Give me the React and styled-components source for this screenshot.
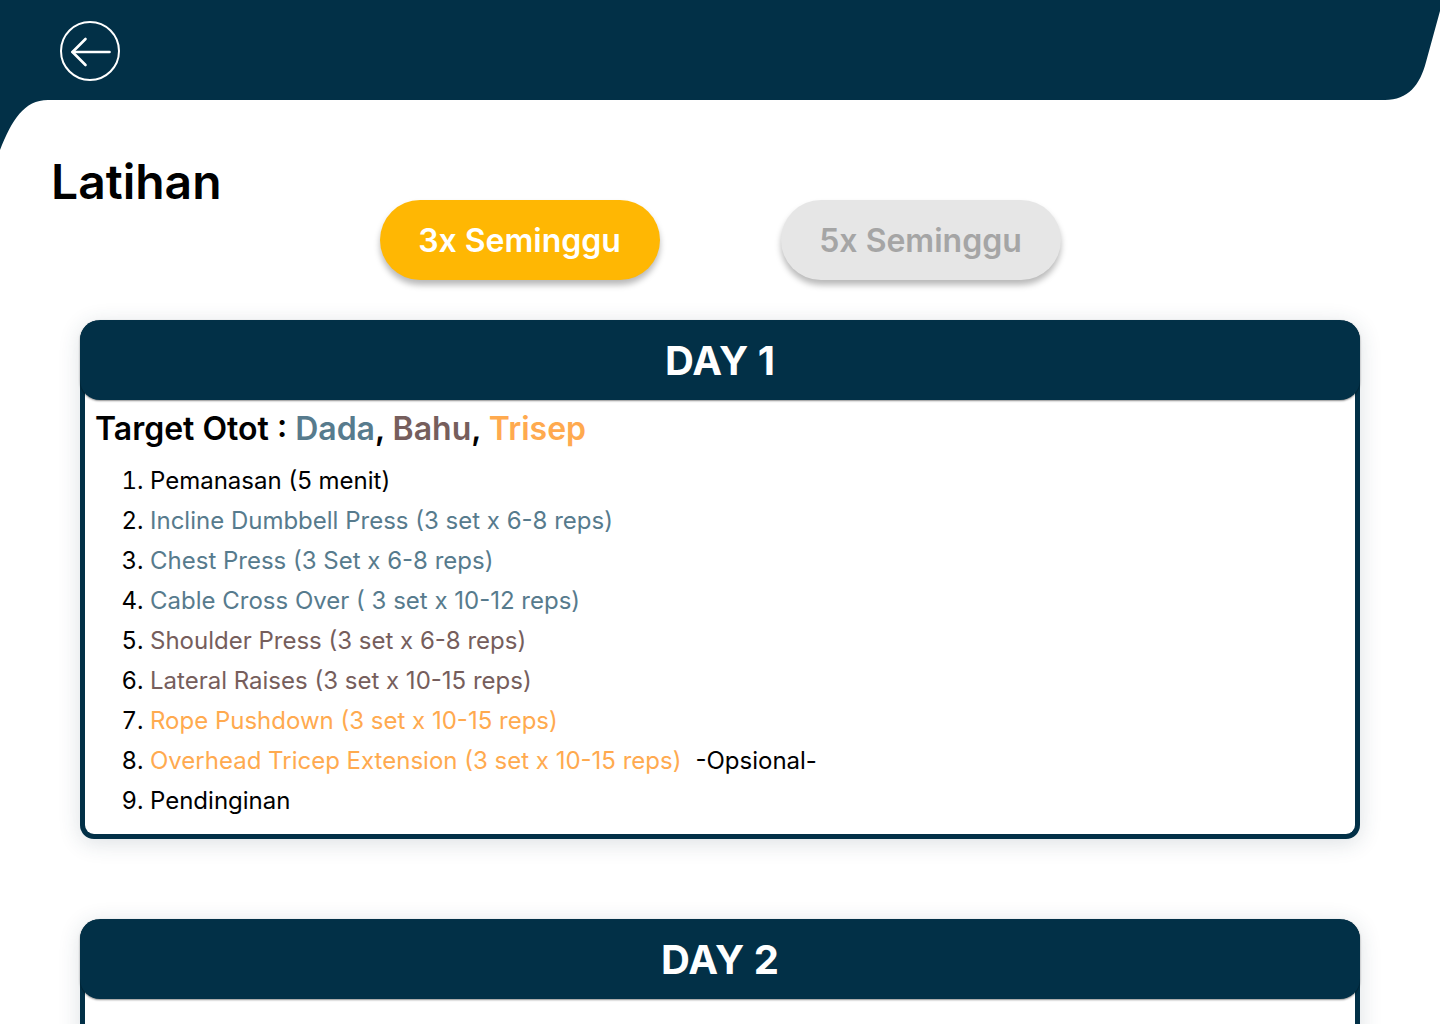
import React from "react";
import styled, { createGlobalStyle } from "styled-components";

const NAVY = "#023047";

const Global = createGlobalStyle`
  * { box-sizing: border-box; }
  html, body { margin: 0; padding: 0; background: #ffffff; }
  body { font-family: Inter, "Noto Sans", Roboto, sans-serif; color: #000; }
`;

const Page = styled.div`
  position: relative;
  width: 1440px;
  min-height: 1024px;
  overflow: hidden;
`;

const HeaderShape = styled.svg`
  position: absolute;
  top: 0;
  left: 0;
  width: 1440px;
  height: 150px;
  z-index: 0;
`;

const TopBar = styled.header`
  position: relative;
  z-index: 1;
  height: 100px;
  display: flex;
  align-items: center;
  padding-left: 60px;
`;

const BackButton = styled.button`
  width: 60px;
  height: 60px;
  padding: 0;
  border: none;
  background: transparent;
  display: flex;
  align-items: center;
  justify-content: center;
  cursor: pointer;
  margin-top: 2px;
`;

const Main = styled.main`
  position: relative;
  z-index: 1;
  display: flex;
  flex-direction: column;
`;

const Title = styled.h1`
  margin: 63px 0 0 51px;
  font-size: 48px;
  line-height: 38px;
  font-weight: 600;
  color: #000;
`;

const ToggleRow = styled.div`
  display: flex;
  justify-content: center;
  gap: 121px;
  margin-top: -1px;
`;

const Toggle = styled.button`
  width: 280px;
  height: 80px;
  border-radius: 40px;
  border: none;
  font-family: Inter, sans-serif;
  font-size: 32px;
  font-weight: 600;
  background: ${(p) => (p.$active ? "#FFB703" : "#E6E6E6")};
  color: ${(p) => (p.$active ? "#FFFFFF" : "#A5A5A5")};
  box-shadow: 0 5px 6px rgba(0, 0, 0, 0.28);
  cursor: pointer;
`;

const Cards = styled.section`
  display: flex;
  flex-direction: column;
  align-items: center;
  gap: 80px;
  margin-top: 40px;
  padding-bottom: 80px;
`;

const Card = styled.article`
  width: 1280px;
  background: #ffffff;
  border: 5px solid ${NAVY};
  border-top: none;
  border-radius: 20px 20px 14px 14px;
  box-shadow: 0 4px 22px rgba(40, 60, 80, 0.16);
  display: flex;
  flex-direction: column;
`;

const CardHead = styled.div`
  margin: 0 -5px;
  height: 80px;
  border-radius: 20px;
  background: ${NAVY};
  box-shadow: 0 1px 2px rgba(0, 0, 0, 0.45);
  display: flex;
  align-items: center;
  justify-content: center;
  color: #ffffff;
  font-size: 40px;
  font-weight: 700;
`;

const CardBody = styled.div`
  padding: ${(p) => p.$top}px 10px 13px 10px;
`;

const Target = styled.h2`
  margin: 0;
  font-size: 32px;
  line-height: 36px;
  font-weight: 600;
  color: #000;
`;

const Muscle = styled.span`
  color: ${(p) => p.$c};
`;

const List = styled.ol`
  margin: 14px 0 0 0;
  padding-left: 55px;
  font-size: 24px;
  line-height: 40px;
  font-weight: 400;
`;

const Item = styled.li`
  color: #000;
`;

const ItemText = styled.span`
  color: ${(p) => p.$c || "#000"};
`;

const Note = styled.span`
  margin-left: 14px;
  color: #000;
`;

const C = {
  dada: "#577B8D",
  bahu: "#765E5C",
  trisep: "#FFAA4F",
};

const days = [
  {
    day: "DAY 1",
    top: 11,
    target: [
      ["Dada", C.dada],
      ["Bahu", C.bahu],
      ["Trisep", C.trisep],
    ],
    items: [
      ["Pemanasan (5 menit)"],
      ["Incline Dumbbell Press (3 set x 6-8 reps)", C.dada],
      ["Chest Press (3 Set x 6-8 reps)", C.dada],
      ["Cable Cross Over ( 3 set x 10-12 reps)", C.dada],
      ["Shoulder Press (3 set x 6-8 reps)", C.bahu],
      ["Lateral Raises (3 set x 10-15 reps)", C.bahu],
      ["Rope Pushdown (3 set x 10-15 reps)", C.trisep],
      ["Overhead Tricep Extension (3 set x 10-15 reps)", C.trisep, "-Opsional-"],
      ["Pendinginan"],
    ],
  },
  {
    day: "DAY 2",
    top: 30,
    target: [
      ["Punggung", C.dada],
      ["Bisep", C.bahu],
    ],
    items: [
      ["Pemanasan (5 menit)"],
      ["Lat Pulldown (3 set x 6-8 reps)", C.dada],
      ["Seated Row (3 set x 6-8 reps)", C.dada],
      ["Barbell Curl (3 set x 10-12 reps)", C.bahu],
      ["Hammer Curl (3 set x 10-15 reps)", C.bahu],
      ["Pendinginan"],
    ],
  },
];

function BackIcon() {
  return (
    <svg width="60" height="60" viewBox="0 0 60 60" fill="none">
      <circle cx="30" cy="30" r="29" stroke="#fff" strokeWidth="2" />
      <path d="M12.5 31H49.5" stroke="#fff" strokeWidth="2.6" strokeLinecap="round" />
      <path d="M25.5 18L12.5 31L25.5 44" stroke="#fff" strokeWidth="2.6" strokeLinecap="round" strokeLinejoin="round" />
    </svg>
  );
}

export default function App() {
  return (
    <>
      <Global />
      <Page>
        <HeaderShape viewBox="0 0 1440 150" preserveAspectRatio="none" aria-hidden="true">
          <path
            d="M0 0 H1443 L1426 62 C1420 85 1408 100 1385 100 H48 C24 100 12 120 0 150 Z"
            fill={NAVY}
          />
        </HeaderShape>
        <TopBar>
          <BackButton aria-label="Kembali">
            <BackIcon />
          </BackButton>
        </TopBar>
        <Main>
          <Title>Latihan</Title>
          <ToggleRow>
            <Toggle $active>3x Seminggu</Toggle>
            <Toggle>5x Seminggu</Toggle>
          </ToggleRow>
          <Cards>
            {days.map((d) => (
              <Card key={d.day}>
                <CardHead>{d.day}</CardHead>
                <CardBody $top={d.top}>
                  <Target>
                    Target Otot :{" "}
                    {d.target.map(([name, col], i) => (
                      <React.Fragment key={name}>
                        <Muscle $c={col}>{name}</Muscle>
                        {i < d.target.length - 1 ? ", " : ""}
                      </React.Fragment>
                    ))}
                  </Target>
                  <List>
                    {d.items.map(([text, col, note]) => (
                      <Item key={text}>
                        <ItemText $c={col}>{text}</ItemText>
                        {note && <Note>{note}</Note>}
                      </Item>
                    ))}
                  </List>
                </CardBody>
              </Card>
            ))}
          </Cards>
        </Main>
      </Page>
    </>
  );
}
